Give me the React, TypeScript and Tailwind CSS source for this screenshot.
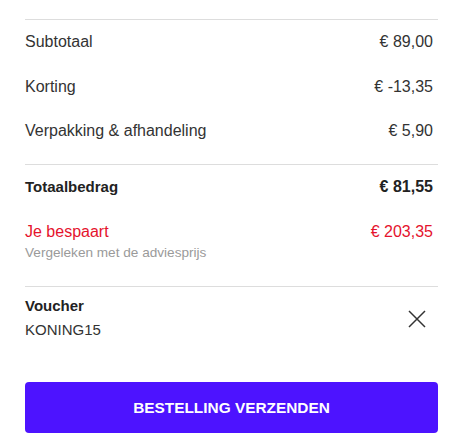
import React from "react";

function Row({ label, value, className = "" }: { label: string; value: string; className?: string }) {
  return (
    <div className={`flex items-center justify-between pr-[5px] text-[16px] leading-[20px] ${className}`}>
      <span>{label}</span>
      <span>{value}</span>
    </div>
  );
}

export default function App() {
  return (
    <div
      className="w-[475px] h-[436px] bg-white text-[#333]"
      style={{ fontFamily: '"Liberation Sans", Arial, sans-serif' }}
    >
      <div className="ml-[25px] w-[413px] pt-[19px]">
        <div className="border-t border-[#dddddd] pt-[12px] pb-[23px]">
          <Row label="Subtotaal" value="€ 89,00" />
          <Row label="Korting" value="€ -13,35" className="mt-[25px]" />
          <Row label="Verpakking & afhandeling" value="€ 5,90" className="mt-[24px]" />
        </div>
        <div className="border-t border-[#dddddd] pt-[12px] pb-[25px]">
          <div className="flex items-center justify-between pr-[5px] leading-[20px] font-bold text-[#222]">
            <span className="text-[15px]">Totaalbedrag</span>
            <span className="text-[16px]">€ 81,55</span>
          </div>
          <div className="mt-[25px] flex items-center justify-between pr-[5px] text-[16px] leading-[20px] text-[#e5132d]">
            <span>Je bespaart</span>
            <span>€ 203,35</span>
          </div>
          <div className="mt-[3px] text-[13.6px] leading-[16px] text-[#9a9a9a]">Vergeleken met de adviesprijs</div>
        </div>
        <div className="border-t border-[#dddddd] pt-[9px] flex items-center justify-between">
          <div>
            <div className="text-[15px] leading-[20px] font-bold text-[#222]">Voucher</div>
            <div className="mt-[4px] text-[15px] leading-[20px]">KONING15</div>
          </div>
          <button className="mr-[9px] mt-[1px] flex h-[24px] w-[24px] items-center justify-center text-[#333]" aria-label="Verwijderen">
            <svg width="20" height="20" viewBox="0 0 20 20" fill="none" stroke="currentColor" strokeWidth="1.5">
              <path d="M2 2 L18 18 M18 2 L2 18" />
            </svg>
          </button>
        </div>
        <button className="mt-[42px] flex h-[51px] w-full items-center justify-center rounded-[4px] bg-[#4d13ff] text-[15.4px] font-bold text-white">
          BESTELLING VERZENDEN
        </button>
      </div>
    </div>
  );
}
